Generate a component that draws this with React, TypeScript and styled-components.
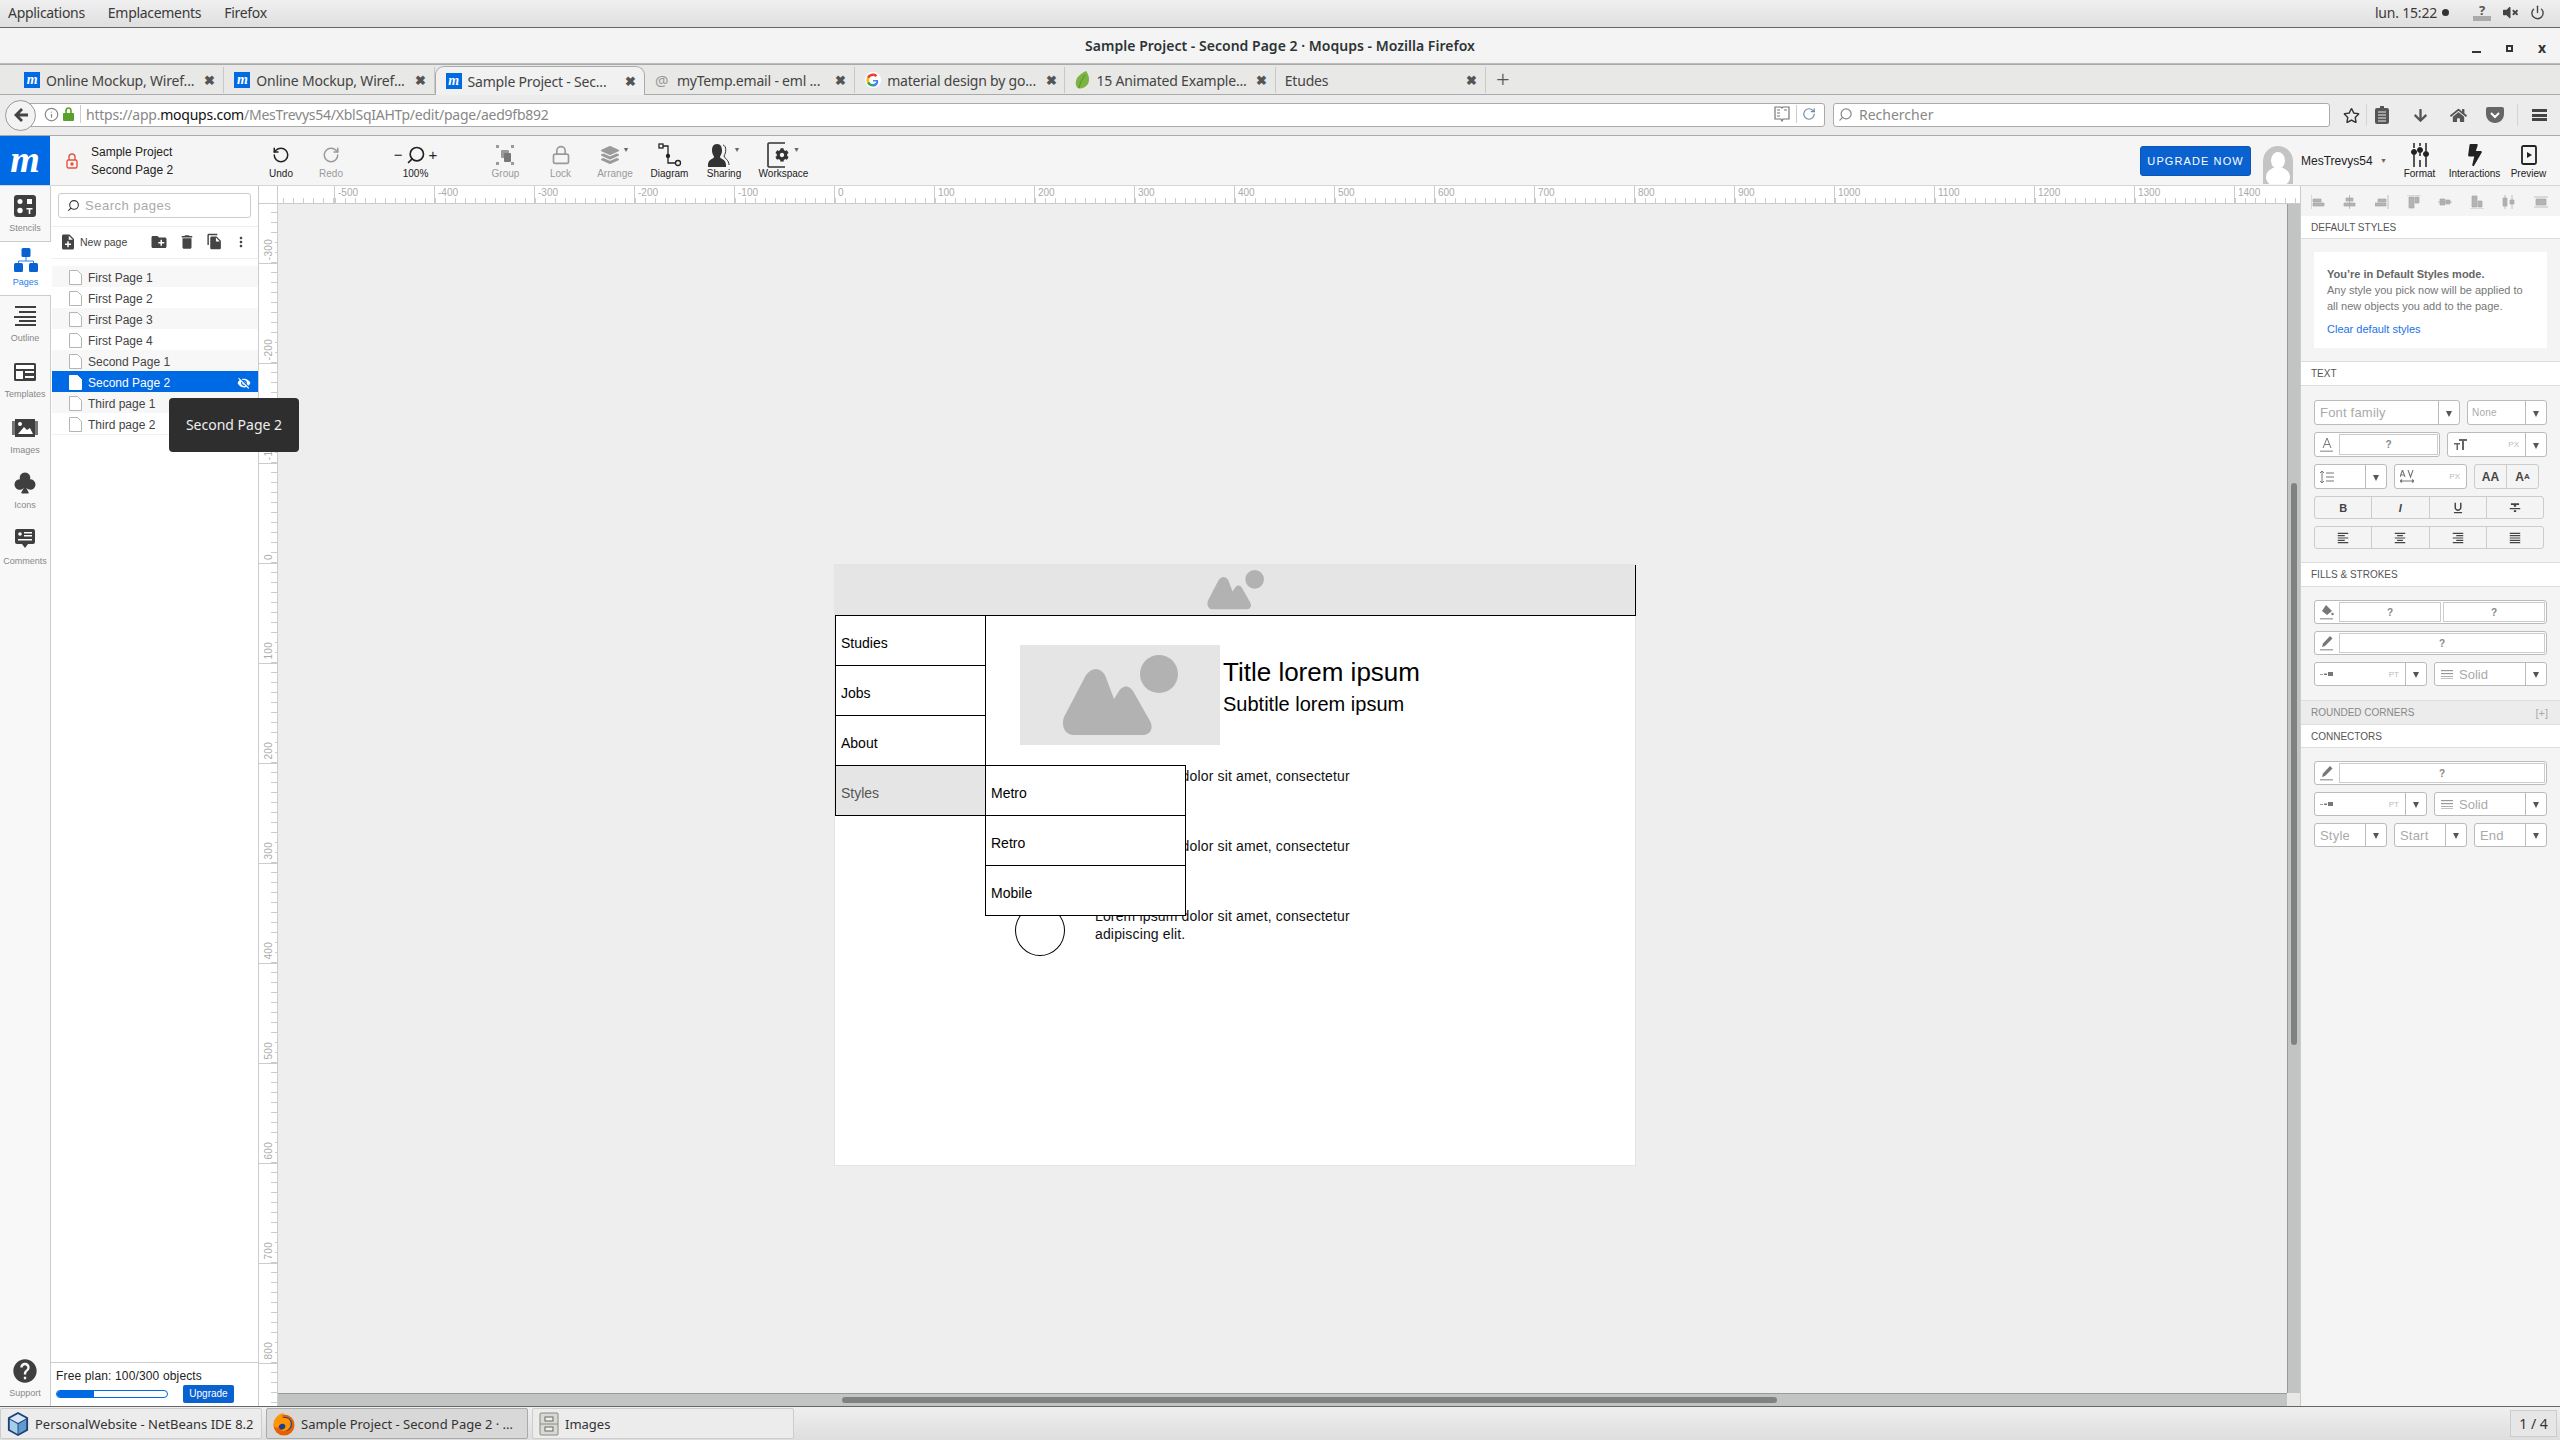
import * as React from 'react';
import styled, { createGlobalStyle, css } from 'styled-components';
import {
  FaArrowDown,
  FaBolt,
  FaCog,
  FaHome,
  FaLayerGroup,
  FaRegStar,
  FaVolumeMute,
} from 'react-icons/fa';
import {
  MdCreateNewFolder,
  MdDelete,
  MdFileCopy,
  MdFormatAlignCenter,
  MdFormatAlignJustify,
  MdFormatAlignLeft,
  MdFormatAlignRight,
  MdFormatStrikethrough,
  MdFormatUnderlined,
  MdMoreVert,
  MdNoteAdd,
  MdVisibilityOff,
  MdHelp,
} from 'react-icons/md';
import { BsSuitClubFill } from 'react-icons/bs';
import { Info, Lock, Power, RotateCcw, RotateCw, Search } from 'lucide-react';

const UI_FONT = '"Noto Sans", "Open Sans", sans-serif';
const APP_FONT = '"Liberation Sans", Arial, sans-serif';
const BLUE = '#0069e4';

const GlobalStyle = createGlobalStyle`
  html, body {
    margin: 0;
    padding: 0;
    overflow: hidden;
    background: #f4f4f4;
  }
  #root {
    width: 2560px;
    height: 1440px;
  }
  * {
    box-sizing: border-box;
  }
`;

const Screen = styled.div`
  position: relative;
  width: 2560px;
  height: 1440px;
  display: flex;
  flex-direction: column;
  font-family: ${APP_FONT};
  overflow: hidden;
`;

const FlippedSearch = styled(Search)`
  transform: scaleX(-1);
  flex: none;
`;

/* gnome shell bar */
const ShellBar = styled.div`
  height: 28px;
  flex: none;
  display: flex;
  align-items: center;
  padding: 0 3px 2px 8px;
  background: linear-gradient(#f0f0f0, #dfdfdf);
  border-bottom: 1px solid #666;
  font-family: ${UI_FONT};
  font-size: 14px;
  color: #3a3a3a;
`;

const ShellMenu = styled.span`
  margin-right: 23px;
  letter-spacing: -0.3px;
`;

const ShellRight = styled.div`
  margin-left: auto;
  display: flex;
  align-items: center;
  color: #3a3a3a;
`;

const Clock = styled.span`
  margin-right: 5px;
  letter-spacing: -0.2px;
`;

const ClockDot = styled.span`
  width: 7px;
  height: 7px;
  border-radius: 50%;
  background: #333;
  margin-right: 24px;
`;

const ShellIcon = styled.span`
  display: flex;
  margin-right: 12px;
  color: #444;
`;

const NetworkGlyph = styled.span`
  width: 18px;
  margin-right: 12px;
  text-align: center;
  font-weight: 700;
  font-size: 13px;
  color: #555;
  border-bottom: 5px solid #aaa;
  line-height: 12px;
`;

/* firefox chrome */
const TitleBar = styled.div`
  height: 36px;
  flex: none;
  position: relative;
  display: flex;
  align-items: center;
  justify-content: center;
  background: #f4f4f4;
  border-bottom: 1px solid #bbb;
  font-family: ${UI_FONT};
  font-size: 14px;
  font-weight: 600;
  letter-spacing: 0.02px;
  color: #2e3436;
`;

const WindowButtons = styled.div`
  position: absolute;
  right: 14px;
  top: 14px;
  display: flex;
  gap: 25px;
  align-items: center;
  height: 12px;
`;

const MinimizeBtn = styled.span`
  width: 9px;
  height: 2px;
  margin-top: 8px;
  background: #333;
`;

const MaximizeBtn = styled.span`
  width: 7px;
  height: 7px;
  border: 2px solid #333;
`;

const CloseBtn = styled.span`
  font-size: 14px;
  font-weight: 700;
  line-height: 12px;
  color: #333;
`;

const TabBar = styled.div`
  height: 31px;
  flex: none;
  display: flex;
  padding: 1px 0 0 14px;
  background: #e8e8e6;
  border-bottom: 1px solid #aaa;
  border-top: 1px solid #aaa;
  font-family: ${UI_FONT};
  font-size: 14px;
  color: #444;
  letter-spacing: -0.2px;
`;

const Tab = styled.div<{ $active?: boolean }>`
  width: 210.3px;
  height: ${p => (p.$active ? '29px' : '26px')};
  display: flex;
  align-items: center;
  padding: 0 8px 0 10px;
  position: relative;
  z-index: ${p => (p.$active ? 1 : 0)};
  background: ${p => (p.$active ? '#f1f1f1' : 'transparent')};
  border: ${p => (p.$active ? '1px solid #aaa' : 'none')};
  border-bottom: none;
  border-radius: ${p => (p.$active ? '9px 9px 0 0' : '0')};
  border-right: ${p => (p.$active ? '1px solid #aaa' : '1px solid #c8c8c8')};
  margin-top: ${p => (p.$active ? '0' : '1px')};
`;

const TabText = styled.span<{ $bare?: boolean }>`
  margin-left: ${p => (p.$bare ? '-1px' : '6px')};
  flex: 1;
  white-space: nowrap;
  overflow: hidden;
`;

const TabClose = styled.span`
  font-size: 13px;
  font-weight: 800;
  color: #555;
`;

const NewTab = styled.span`
  margin: 0 0 0 10px;
  font-size: 24px;
  line-height: 25px;
  font-weight: 300;
  color: #555;
`;

const Favicon = styled.span`
  width: 16px;
  height: 16px;
  flex: none;
  background: ${BLUE};
  color: #fff;
  font: italic 700 14px/15px 'Liberation Serif', serif;
  text-align: center;
`;

const AtIcon = styled.span`
  width: 16px;
  flex: none;
  color: #999;
  font-size: 15px;
`;

const NavBar = styled.div`
  height: 41px;
  flex: none;
  display: flex;
  align-items: center;
  padding-left: 5px;
  background: #ececec;
  border-bottom: 1px solid #aaa;
  font-family: ${UI_FONT};
  font-size: 14px;
  position: relative;
`;

const BackButton = styled.div`
  width: 31px;
  height: 31px;
  border-radius: 50%;
  background: #f3f3f3;
  border: 1px solid #999;
  display: flex;
  align-items: center;
  justify-content: center;
  z-index: 1;
  flex: none;
`;

const UrlField = styled.div`
  width: 1805px;
  height: 24px;
  margin-left: -16px;
  padding: 0 0 2px 23px;
  display: flex;
  align-items: center;
  background: #fff;
  border: 1px solid #aaa;
  border-radius: 0 3px 3px 0;
  flex: none;
  letter-spacing: -0.24px;
`;

const UrlIconGap = styled.span`
  width: 4px;
`;

const UrlDivider = styled.span`
  width: 1px;
  height: 18px;
  background: #ccc;
  margin: 0 5px 0 6px;
`;

const UrlMuted = styled.span`
  color: #888;
`;

const UrlHost = styled.span`
  color: #111;
`;

const UrlTools = styled.div`
  margin-left: auto;
  display: flex;
  align-items: center;
  color: #777;
  padding-right: 8px;
`;

const SearchField = styled.div`
  width: 497px;
  height: 24px;
  margin-left: 8px;
  padding: 0 0 2px 4px;
  display: flex;
  align-items: center;
  gap: 6px;
  background: #fff;
  border: 1px solid #aaa;
  border-radius: 3px;
  color: #888;
  flex: none;
`;

const NavIcons = styled.div`
  flex: 1;
  display: grid;
  grid-template-columns: 30px 1px 30px 46px 30px 44px 1px 42px;
  align-items: center;
  justify-items: center;
  color: #555;
  padding-left: 6px;
`;

const NavDivider = styled.span`
  width: 1px;
  height: 22px;
  background: #d4d4d4;
`;

const Hamburger = styled.span`
  width: 15px;
  height: 12px;
  border-top: 3px solid #444;
  border-bottom: 3px solid #444;
  position: relative;
  &::after {
    content: '';
    position: absolute;
    left: 0;
    right: 0;
    top: 1.5px;
    height: 3px;
    background: #444;
  }
`;

/* moqups toolbar */
const AppBar = styled.div`
  height: 50px;
  flex: none;
  display: flex;
  background: #f5f5f5;
  border-bottom: 1px solid #d6d6d6;
`;

const Logo = styled.div`
  width: 50px;
  flex: none;
  background: ${BLUE};
  color: #fff;
  font: italic 700 38px/46px 'Liberation Serif', serif;
  text-align: center;
`;

const ProjectBlock = styled.div`
  width: 206px;
  flex: none;
  display: flex;
  align-items: center;
  padding: 1px 0 0 16px;
  gap: 13px;
  color: #e4543f;
`;

const ProjectText = styled.div`
  font-size: 12px;
  line-height: 18px;
  color: #222;
  white-space: nowrap;
`;

const Tool = styled.div<{ $w: number; $off?: boolean }>`
  width: ${p => p.$w}px;
  flex: none;
  display: flex;
  flex-direction: column;
  align-items: center;
  padding-top: 7px;
  color: ${p => (p.$off ? '#9a9a9a' : '#222')};
  position: relative;
`;

const ZoomTool = styled(Tool)`
  margin-right: 3px;
`;

const ToolIcon = styled.div`
  height: 23px;
  display: flex;
  align-items: center;
  justify-content: center;
  gap: 3px;
`;

const ToolLabel = styled.div`
  font-size: 10px;
  line-height: 13px;
  margin-top: 1px;
  white-space: nowrap;
`;

const ZoomSign = styled.span`
  font-size: 15px;
  line-height: 15px;
`;

const Caret = styled.span`
  font-size: 7px;
  color: #666;
  margin-left: 1px;
  align-self: flex-start;
  margin-top: 3px;
`;

const AppBarRight = styled.div`
  margin-left: auto;
  display: flex;
  align-items: center;
  padding-right: 5px;
`;

const UpgradeNow = styled.div`
  width: 111px;
  height: 30px;
  border-radius: 3px;
  background: #0a62d0;
  border: 1px solid #0a55b5;
  color: #fff;
  font-size: 11px;
  letter-spacing: 1.1px;
  line-height: 28px;
  text-align: center;
`;

const Avatar = styled.div`
  width: 30px;
  height: 38px;
  margin: 8px 8px 0 12px;
  border-radius: 15px 15px 0 0;
  background: #c4c4c4;
  position: relative;
  overflow: hidden;
  &::before {
    content: '';
    position: absolute;
    left: 8px;
    top: 6px;
    width: 14px;
    height: 17px;
    border-radius: 50%;
    background: #fff;
  }
  &::after {
    content: '';
    position: absolute;
    left: 3px;
    top: 21px;
    width: 24px;
    height: 20px;
    border-radius: 50%;
    background: #fff;
  }
`;

const UserName = styled.div`
  font-size: 12px;
  color: #222;
  width: 79px;
  white-space: nowrap;
`;

const UserCaret = styled.span`
  font-size: 7px;
  color: #666;
  margin-right: 5px;
`;

const RightTools = styled.div`
  display: flex;
  align-self: stretch;
`;

/* body */
const Main = styled.div`
  flex: 1;
  min-height: 0;
  display: flex;
  position: relative;
`;

const Rail = styled.div`
  width: 51px;
  flex: none;
  display: flex;
  flex-direction: column;
  background: #f8f8f8;
  border-right: 1px solid #ccc;
`;

const RailItem = styled.div<{ $active?: boolean; $h: number }>`
  height: ${p => p.$h}px;
  flex: none;
  display: flex;
  flex-direction: column;
  align-items: center;
  justify-content: flex-end;
  padding-bottom: 8px;
  font-size: 9px;
  color: ${p => (p.$active ? '#2b7de9' : '#888')};
  background: ${p => (p.$active ? '#fff' : 'transparent')};
  border-top: ${p => (p.$active ? '1px solid #ccc' : 'none')};
  border-bottom: ${p => (p.$active ? '1px solid #ccc' : 'none')};
  margin-right: ${p => (p.$active ? '-1px' : '0')};
  position: relative;
`;

const RailIconBox = styled.div`
  height: 24px;
  margin-bottom: 5px;
  display: flex;
  align-items: center;
  justify-content: center;
`;

const RailSpacer = styled.div`
  flex: 1;
`;

const PagesPanel = styled.div`
  width: 208px;
  flex: none;
  display: flex;
  flex-direction: column;
  background: #fff;
  border-right: 1px solid #ccc;
`;

const PageSearch = styled.div`
  height: 25px;
  margin: 7px 7px 8px 7px;
  display: flex;
  align-items: center;
  gap: 5px;
  padding-left: 8px;
  border: 1px solid #ccc;
  border-radius: 3px;
  font-size: 13px;
  letter-spacing: 0.5px;
  color: #aaa;
`;

const PageTools = styled.div`
  height: 33px;
  display: flex;
  align-items: center;
  padding: 0 0 2px 8px;
  color: #444;
  border-top: 1px solid #eee;
  border-bottom: 1px solid #eee;
`;

const NewPageLabel = styled.span`
  font-size: 10.5px;
  margin: 0 23px 0 3px;
  color: #444;
  white-space: nowrap;
`;

const PageToolGap = styled.span`
  width: 10px;
`;

const PageList = styled.div`
  margin: 7px 0 0 1px;
  border-bottom: 1px solid #f0f0f0;
`;

const PageRow = styled.div<{ $selected?: boolean; $odd?: boolean }>`
  height: 21px;
  display: flex;
  align-items: center;
  padding: 2px 7px 0 17px;
  gap: 6px;
  font-size: 12px;
  color: ${p => (p.$selected ? '#fff' : '#444')};
  background: ${p => (p.$selected ? '#0069e4' : p.$odd ? '#f7f7f7' : '#fff')};
`;

const PageName = styled.span`
  flex: 1;
`;

const PlanBox = styled.div`
  margin-top: auto;
  height: 44px;
  padding: 6px 0 0 5px;
  border-top: 1px solid #ccc;
  font-size: 12px;
  letter-spacing: 0.15px;
  color: #222;
`;

const PlanRow = styled.div`
  display: flex;
  align-items: center;
  margin-top: 2px;
`;

const PlanTrack = styled.div`
  width: 112px;
  height: 8px;
  border: 1px solid ${BLUE};
  border-radius: 4px;
  overflow: hidden;
  background: #fff;
`;

const PlanFill = styled.div`
  height: 100%;
  background: ${BLUE};
`;

const PlanUpgrade = styled.div`
  width: 51px;
  height: 18px;
  margin-left: 15px;
  background: #0a62d0;
  border-radius: 2px;
  color: #fff;
  font-size: 10px;
  letter-spacing: 0;
  line-height: 18px;
  text-align: center;
`;

const Tooltip = styled.div`
  position: absolute;
  left: 169px;
  top: 212px;
  width: 130px;
  height: 54px;
  border-radius: 4px;
  background: #2e2e2e;
  color: #eee;
  font-family: ${UI_FONT};
  font-size: 14px;
  line-height: 54px;
  text-align: center;
  z-index: 5;
`;

const Stage = styled.div`
  flex: 1;
  min-width: 0;
  display: flex;
  flex-direction: column;
`;

const TopRuler = styled.div`
  height: 18px;
  flex: none;
  display: flex;
  background: #fff;
  overflow: hidden;
  border-bottom: 1px solid #ccc;
`;

const RulerCorner = styled.div`
  width: 19px;
  flex: none;
  border-right: 1px solid #ccc;
`;

const horizontalTicks = css`
  background-size: 100% 5px;
  background-position: left bottom;
  background-repeat: no-repeat;
`;

const RulerLead = styled.div`
  width: 56px;
  flex: none;
  background-image: repeating-linear-gradient(to left, #ccc 0 1px, transparent 1px 10px);
  ${horizontalTicks}
`;

const RulerCell = styled.div`
  width: 100px;
  flex: none;
  border-left: 1px solid #ccc;
  padding: 1px 0 0 3px;
  font-size: 10px;
  line-height: 11px;
  color: #aaa;
  background-image: repeating-linear-gradient(to right, #ccc 0 1px, transparent 1px 10px);
  ${horizontalTicks}
`;

const StageBody = styled.div`
  flex: 1;
  min-height: 0;
  display: flex;
`;

const SideRuler = styled.div`
  width: 19px;
  flex: none;
  display: flex;
  flex-direction: column;
  background: #fff;
  border-right: 1px solid #ccc;
  overflow: hidden;
`;

const SideCell = styled.div<{ $h: number }>`
  height: ${p => p.$h}px;
  flex: none;
  display: flex;
  align-items: flex-end;
  justify-content: flex-start;
  border-bottom: 1px solid #ccc;
  background-image: repeating-linear-gradient(to top, #ccc 0 1px, transparent 1px 10px);
  background-size: 6px 100%;
  background-position: right bottom;
  background-repeat: no-repeat;
  font-size: 10px;
  color: #aaa;
`;

const SideLabel = styled.span`
  writing-mode: vertical-rl;
  transform: rotate(180deg);
  line-height: 13px;
  margin: 0 0 3px 3px;
  background: #fff;
  letter-spacing: 0.3px;
`;

const CanvasColumn = styled.div`
  flex: 1;
  min-width: 0;
  display: flex;
  flex-direction: column;
`;

const CanvasRow = styled.div`
  flex: 1;
  min-height: 0;
  display: flex;
`;

const Canvas = styled.div`
  flex: 1;
  position: relative;
  background: #eee;
  overflow: hidden;
`;

const VScroll = styled.div`
  width: 13px;
  flex: none;
  padding: 279px 3px 0 3px;
  background: #c2c4c3;
  border-left: 1px solid #999;
`;

const VThumb = styled.div`
  height: 562px;
  border-radius: 3px;
  background: #7f8281;
`;

const HScrollRow = styled.div`
  height: 13px;
  flex: none;
  display: flex;
`;

const HScroll = styled.div`
  flex: 1;
  padding: 3px 0 0 564px;
  background: #c2c4c3;
  border-top: 1px solid #999;
`;

const HThumb = styled.div`
  width: 935px;
  height: 6px;
  border-radius: 3px;
  background: #7f8281;
`;

const ScrollCorner = styled.div`
  width: 13px;
  flex: none;
  background: #e8e8e6;
`;

/* wireframe on the canvas */
const Page = styled.div`
  position: absolute;
  left: 557px;
  top: 361px;
  width: 800px;
  height: 600px;
  background: #fff;
  box-shadow: 0 0 0 1px #e4e4e4;
`;

const Widget = styled.div<{ $x: number; $y: number; $w: number; $h: number }>`
  position: absolute;
  left: ${p => p.$x}px;
  top: ${p => p.$y}px;
  width: ${p => p.$w}px;
  height: ${p => p.$h}px;
`;

const HeaderBand = styled(Widget)`
  background: #e5e5e5;
  border-right: 1px solid #000;
  border-bottom: 1px solid #000;
  display: flex;
  align-items: center;
  justify-content: center;
`;

const ImageBox = styled(Widget)`
  background: #e5e5e5;
  display: flex;
  align-items: center;
  justify-content: center;
`;

const MenuItem = styled(Widget)<{ $on?: boolean }>`
  background: ${p => (p.$on ? '#e5e5e5' : '#fff')};
  border: 1px solid #000;
  border-top: none;
  padding-left: 5px;
  font-size: 14px;
  line-height: 54px;
  color: ${p => (p.$on ? '#555' : '#000')};
  z-index: 2;
`;

const SubMenu = styled(MenuItem)`
  z-index: 3;
`;

const SubMenuTop = styled(SubMenu)`
  border-top: 1px solid #000;
  line-height: 54px;
`;

const Heading = styled(Widget)<{ $size: number }>`
  font-size: ${p => p.$size}px;
  line-height: ${p => p.$h}px;
  color: #000;
  white-space: nowrap;
`;

const Para = styled(Widget)`
  font-size: 14px;
  line-height: 18px;
  letter-spacing: 0.15px;
  color: #111;
  z-index: 1;
`;

const Circle = styled(Widget)`
  border: 1px solid #000;
  border-radius: 50%;
  background: #fff;
  z-index: 1;
`;

/* right panel */
const Inspector = styled.div`
  width: 260px;
  flex: none;
  background: #f4f4f4;
  border-left: 1px solid #ccc;
  color: #666;
`;

const AlignBar = styled.div`
  height: 30px;
  display: flex;
  align-items: center;
  justify-content: space-between;
  padding: 2px 12px 0 10px;
  background: #f4f4f4;
`;

const SectionHead = styled.div<{ $muted?: boolean; $noTop?: boolean }>`
  height: ${p => (p.$noTop ? '23px' : '25px')};
  display: flex;
  align-items: center;
  justify-content: space-between;
  padding: 0 12px 0 10px;
  background: ${p => (p.$muted ? '#ececec' : '#fff')};
  color: ${p => (p.$muted ? '#888' : '#555')};
  font-size: 10px;
  border-bottom: 1px solid #ddd;
  border-top: ${p => (p.$noTop ? 'none' : '1px solid #ddd')};
`;

const SectionBody = styled.div<{ $top: number; $bottom: number }>`
  display: flex;
  flex-direction: column;
  gap: 7px;
  padding: ${p => p.$top}px 0 ${p => p.$bottom}px 13px;
`;

const InfoCard = styled.div`
  width: 233px;
  height: 96px;
  margin: 13px 0 13px 13px;
  padding: 14px 13px 0 13px;
  background: #fff;
  font-size: 11px;
  line-height: 16px;
  color: #777;
  white-space: nowrap;
`;

const InfoStrong = styled.div`
  font-weight: 700;
  color: #666;
`;

const InfoLink = styled.div`
  margin-top: 7px;
  color: #1a73e8;
`;

const FieldRow = styled.div<{ $gap?: number }>`
  display: flex;
  gap: ${p => p.$gap ?? 7}px;
`;

const Field = styled.div<{ $w: number; $h?: number }>`
  width: ${p => p.$w}px;
  height: ${p => p.$h ?? 25}px;
  flex: none;
  display: flex;
  align-items: center;
  background: #fff;
  border: 1px solid #bbb;
  border-radius: 3px;
  font-size: 13px;
  color: #aaa;
  overflow: hidden;
`;

const FieldText = styled.span<{ $small?: boolean }>`
  flex: 1;
  padding-left: ${p => (p.$small ? '4px' : '5px')};
  font-size: ${p => (p.$small ? '10px' : '13px')};
  white-space: nowrap;
  letter-spacing: 0.2px;
`;

const FieldUnit = styled.span`
  margin-left: auto;
  padding-right: 6px;
  font-size: 8px;
  color: #bbb;
`;

const FieldIcon = styled.span`
  display: flex;
  width: 24px;
  flex: none;
  justify-content: center;
  align-items: center;
  color: #777;
`;

const DropArrow = styled.span`
  width: 21px;
  align-self: stretch;
  flex: none;
  display: flex;
  align-items: center;
  justify-content: center;
  border-left: 1px solid #bbb;
  margin-left: auto;
  &::after {
    content: '';
    width: 0;
    height: 0;
    border-left: 3.5px solid transparent;
    border-right: 3.5px solid transparent;
    border-top: 6px solid #555;
    margin-top: 2px;
  }
`;

const FieldUnitArrow = styled(DropArrow)`
  margin-left: 0;
`;

const Swatch = styled.span`
  flex: 1;
  align-self: stretch;
  margin: 1px 1px 1px 0;
  border: 1px solid #ccc;
  display: flex;
  align-items: center;
  justify-content: center;
  color: #888;
  font-size: 10px;
  font-weight: 700;
  & + & {
    margin-left: 1px;
  }
`;

const ButtonGroup = styled.div<{ $w: number; $h: number }>`
  width: ${p => p.$w}px;
  height: ${p => p.$h}px;
  flex: none;
  display: flex;
  border: 1px solid #ccc;
  border-radius: 3px;
  background: #f4f4f4;
  overflow: hidden;
`;

const GroupButton = styled.span<{ $weight?: number; $italic?: boolean; $size?: number }>`
  flex: 1;
  display: flex;
  align-items: center;
  justify-content: center;
  color: #444;
  font-size: ${p => p.$size ?? 11}px;
  font-weight: ${p => p.$weight ?? 400};
  font-style: ${p => (p.$italic ? 'italic' : 'normal')};
  & + & {
    border-left: 1px solid #ccc;
  }
`;

const PlainFont = styled.span`
  font-size: 11px;
  color: #aaa;
`;

const SmallA = styled.span`
  font-size: 8px;
`;

/* window list at the bottom */
const TaskBar = styled.div`
  height: 34px;
  flex: none;
  display: flex;
  align-items: center;
  gap: 4px;
  padding: 0 3px 0 0;
  background: linear-gradient(#efefef, #dedede);
  border-top: 1px solid #666;
  font-family: ${UI_FONT};
  font-size: 13px;
  color: #333;
`;

const TaskButton = styled.div<{ $active?: boolean }>`
  width: 262px;
  height: 31px;
  flex: none;
  display: flex;
  align-items: center;
  gap: 6px;
  padding-left: 6px;
  white-space: nowrap;
  background: ${p => (p.$active ? '#d8d8d8' : '#ececec')};
  border: 1px solid ${p => (p.$active ? '#aaa' : '#ccc')};
  border-radius: 2px;
  & > svg {
    flex: none;
  }
`;

const Pager = styled.div`
  margin-left: auto;
  width: 47px;
  height: 27px;
  border: 1px solid #ccc;
  background: #e6e6e6;
  text-align: center;
  line-height: 25px;
  font-size: 14px;
`;

/* drawings */
const Mountains = ({ width }: { width: number }) => (
  <svg width={width} viewBox="0 0 116 80" fill="#b2b2b2">
    <path d="M12 80C2 80-1 70 2 62L24 20C30 12 38 12 43 20L52 44 57 36C61 30 67 30 71 36L88 66C92 74 88 80 80 80Z" />
    <circle cx="97" cy="19" r="19" />
  </svg>
);

const PageGlyph = ({ filled }: { filled?: boolean }) => (
  <svg width="13" height="15" viewBox="0 0 13 15">
    <path d="M1 .5H8.5L12.5 4.5V14.5H.5V.5Z" fill="#fff" stroke={filled ? '#fff' : '#b4b4b4'} />
  </svg>
);

const StencilsIcon = () => (
  <svg width="22" height="22" viewBox="0 0 22 22">
    <rect width="22" height="22" rx="3" fill="#3f3f3f" />
    <rect x="13" y="4" width="5" height="5" fill="#fff" />
    <circle cx="6" cy="6.5" r="2.5" fill="#fff" />
    <circle cx="6" cy="15.5" r="2.7" fill="#fff" />
    <path d="M12.5 13H18.5V14.5H16.3V19H14.7V14.5H12.5Z" fill="#fff" />
  </svg>
);

const PagesIcon = () => (
  <svg width="24" height="24" viewBox="0 0 24 24">
    <path d="M12 9V13M4.5 16V13H19.5V16" stroke="#2b7de9" fill="none" />
    <rect x="7.5" y="0" width="9" height="9" rx="1.5" fill="#0a62d0" />
    <rect x="0" y="15" width="9" height="9" rx="1.5" fill="#0a62d0" />
    <rect x="15" y="15" width="9" height="9" rx="1.5" fill="#0a62d0" />
  </svg>
);

const OutlineIcon = () => (
  <svg width="22" height="20" viewBox="0 0 22 20" fill="#3f3f3f">
    <rect x="1" y="0" width="21" height="2" />
    <rect x="5" y="5" width="17" height="2" />
    <rect x="0" y="10" width="22" height="2" />
    <rect x="5" y="14" width="17" height="2" />
    <rect x="1" y="18" width="21" height="2" />
  </svg>
);

const TemplatesIcon = () => (
  <svg width="22" height="18" viewBox="0 0 22 18">
    <rect width="22" height="18" rx="1.5" fill="#3f3f3f" />
    <rect x="2" y="2" width="18" height="4" fill="#fff" />
    <rect x="2" y="8" width="7" height="8" fill="#fff" />
    <rect x="11" y="8" width="9" height="2" fill="#fff" />
    <rect x="11" y="13" width="9" height="2" fill="#fff" />
  </svg>
);

const ImagesIcon = () => (
  <svg width="26" height="18" viewBox="0 0 26 18">
    <rect x="0" y="2" width="26" height="14" fill="#777" />
    <rect x="3" y="0" width="20" height="18" fill="#3f3f3f" />
    <path d="M6 15L12 8 15 11 18 9 21 15Z" fill="#fff" />
    <circle cx="8" cy="5" r="2" fill="#fff" />
  </svg>
);

const CommentsIcon = () => (
  <svg width="20" height="20" viewBox="0 0 20 20">
    <path d="M2 0H18Q20 0 20 2V13Q20 15 18 15H13L10 19 7 15H2Q0 15 0 13V2Q0 0 2 0Z" fill="#3f3f3f" />
    <circle cx="5" cy="5" r="1.8" fill="#fff" />
    <rect x="9" y="3" width="8" height="1.5" fill="#fff" />
    <rect x="9" y="6" width="8" height="1.5" fill="#fff" />
    <rect x="3" y="10" width="14" height="1.5" fill="#fff" />
  </svg>
);

const GroupIcon = () => (
  <svg width="20" height="22" viewBox="0 0 20 22" fill="#9a9a9a">
    <rect x="5" y="6" width="8" height="8" rx="1" />
    <rect x="8" y="9" width="7" height="9" rx="1" fill="#777" />
    <rect x="0" y="1" width="3" height="3" />
    <rect x="15" y="1" width="3" height="3" />
    <rect x="0" y="18" width="3" height="3" />
    <rect x="15" y="18" width="3" height="3" />
  </svg>
);

const DiagramIcon = () => (
  <svg width="24" height="24" viewBox="0 0 24 24" fill="none" stroke="#222" strokeWidth="1.3">
    <rect x="1" y="1" width="4" height="4" />
    <path d="M5 3H10V12M10 12V20H18" />
    <circle cx="20" cy="20" r="2.5" />
    <circle cx="10" cy="13" r="1.5" fill="#222" />
  </svg>
);

const SharingIcon = () => (
  <svg width="22" height="24" viewBox="0 0 22 24" fill="#333">
    <path d="M9 1C13 1 14 4 14 8 14 11 12 13 12 14 12 16 18 16 18 22V24H0V22C0 16 6 16 6 14 6 13 4 11 4 8 4 4 5 1 9 1Z" />
    <path d="M15 2C19 3 18 10 16 13 17 16 21 17 21 22" fill="none" stroke="#333" />
  </svg>
);

const WorkspaceIcon = () => (
  <svg width="20" height="26" viewBox="0 0 20 26" fill="none" stroke="#333" strokeWidth="1.6">
    <path d="M18 1H2Q1 1 1 2V24Q1 25 2 25H18" />
  </svg>
);

const WorkspaceGlyph = styled.span`
  display: flex;
  align-items: center;
  gap: 0;
  & > svg + svg {
    margin-left: -12px;
  }
`;

const FormatIcon = () => (
  <svg width="18" height="24" viewBox="0 0 18 24" fill="#222" stroke="#222">
    <path d="M3 0V5M3 12V24M9 0V3M9 10V13M9 17V24M15 0V8M15 14V24" strokeWidth="1.5" />
    <circle cx="3" cy="9" r="2.5" />
    <circle cx="9" cy="7" r="2.5" />
    <circle cx="15" cy="11" r="2.5" />
  </svg>
);

const PreviewIcon = () => (
  <svg width="16" height="20" viewBox="0 0 16 20">
    <rect x="1" y="1" width="14" height="18" rx="1.5" fill="none" stroke="#222" strokeWidth="1.8" />
    <path d="M6 7L11 10 6 13Z" fill="#222" />
  </svg>
);

const PadlockRed = () => (
  <svg width="12" height="16" viewBox="0 0 12 16" fill="none" stroke="#e4543f" strokeWidth="1.4">
    <path d="M3 7V4C3 2 4.5 1 6 1S9 2 9 4V7" />
    <rect x="1" y="7" width="10" height="8" rx="1.5" />
    <circle cx="6" cy="11" r="1" fill="#e4543f" />
  </svg>
);

const GoogleIcon = () => (
  <svg width="16" height="16" viewBox="0 0 16 16">
    <circle cx="8" cy="8" r="8" fill="#fff" />
    <path d="M13 8H8V9.6H11.3C11 11 9.8 12 8 12V14.6C11.4 14.6 14 12 13 8Z" fill="#4285f4" />
    <path d="M8 12C6.2 12 4.8 10.8 4.2 9.4L2 11C3 13.2 5.4 14.6 8 14.6Z" fill="#34a853" />
    <path d="M4.2 9.4C4 8.6 4 7.4 4.2 6.6L2 5C1.2 6.6 1.2 9.4 2 11Z" fill="#fbbc05" />
    <path d="M8 4C9 4 10 4.4 10.6 5L12.4 3.2C11.2 2 9.7 1.4 8 1.4 5.4 1.4 3 2.8 2 5L4.2 6.6C4.8 5.2 6.2 4 8 4Z" fill="#ea4335" />
  </svg>
);

const LeafIcon = () => (
  <svg width="15" height="18" viewBox="0 0 15 18">
    <path d="M11 0C14 4 15 9 13 13 11 16 7 18 4 17.5 2 17 0 14 1 10 2 5 7 2 11 0Z" fill="#7cb342" />
    <path d="M4 17C5 12 7 8 10 4" stroke="#5a8f2a" fill="none" />
  </svg>
);

const NetBeansIcon = () => (
  <svg width="22" height="26" viewBox="0 0 24 26">
    <path d="M12 0L23 6V20L12 26 1 20V6Z" fill="#1c3f78" />
    <path d="M12 2L21 7 12 12 3 7Z" fill="#d6e8f7" />
    <path d="M3 8L11.5 13V24L3 19Z" fill="#a8cde9" />
    <path d="M21 8L12.5 13V24L21 19Z" fill="#5f9bcf" />
  </svg>
);

const FirefoxIcon = () => (
  <svg width="22" height="24" viewBox="0 0 22 24">
    <circle cx="11" cy="13" r="10.5" fill="#e66000" />
    <circle cx="12" cy="12" r="7" fill="#1d3f91" />
    <path d="M1 14C0 8 4 2 11 1 8 4 9 6 12 6 17 6 19 11 17 15 15 19 10 20 7 18 12 18 14 14 11 12 8 11 6 13 5 16 3 16 2 15 1 14Z" fill="#ff9500" />
  </svg>
);

const CabinetIcon = () => (
  <svg width="20" height="24" viewBox="0 0 20 24">
    <rect x="1" y="1" width="18" height="22" rx="1" fill="#d9d9d2" stroke="#888" />
    <path d="M1 12H19" stroke="#888" />
    <rect x="6" y="5" width="8" height="4" fill="#eee" stroke="#666" />
    <rect x="6" y="15" width="8" height="4" fill="#eee" stroke="#666" />
  </svg>
);

const ClipboardIcon = () => (
  <svg width="14" height="18" viewBox="0 0 14 18" fill="#555">
    <path d="M5 0H9V2H12Q14 2 14 4V16Q14 18 12 18H2Q0 18 0 16V4Q0 2 2 2H5Z" />
    <path d="M3 6H11M3 9H11M3 12H11M3 15H11" stroke="#ececec" strokeWidth="1" />
  </svg>
);

const PocketIcon = () => (
  <svg width="18" height="16" viewBox="0 0 18 16">
    <path d="M2 0H16Q18 0 18 2V7C18 12 14 16 9 16S0 12 0 7V2Q0 0 2 0Z" fill="#666" />
    <path d="M5 6L9 10 13 6" fill="none" stroke="#fff" strokeWidth="2" />
  </svg>
);

const ReaderIcon = () => (
  <svg width="16" height="16" viewBox="0 0 16 16" fill="none" stroke="#777" strokeWidth="1.2">
    <path d="M1 1H7L8 2 9 1H15V13H9L8 15 7 13H1Z" />
    <path d="M3 4H6M3 7H6M3 10H6M10 4H13" />
  </svg>
);

const ArrowBack = () => (
  <svg width="16" height="16" viewBox="0 0 16 16" fill="#444">
    <path d="M8 1L1 8 8 15 10 13 6.5 9.5H15V6.5H6.5L10 3Z" />
  </svg>
);

const BackLock = () => (
  <svg width="11" height="14" viewBox="0 0 11 14">
    <path d="M3 6V4C3 2 4 1 5.5 1S8 2 8 4V6" fill="none" stroke="#5aa02c" strokeWidth="1.6" />
    <rect y="6" width="11" height="8" rx="1" fill="#5aa02c" />
  </svg>
);

const ALIGN_SHAPES = [
  'M0 0V14M2 4H10V7H2ZM2 8H13V11H2Z',
  'M6.5 0V14M3 3H10V6H3ZM1 8H12V11H1Z',
  'M13 0V14M3 4H11V7H3ZM0 8H11V11H0Z',
  'M0 0H14M2 2H7V13H2ZM8 2H12V8H8Z',
  'M0 7H14M2 4H7V10H2ZM8 5H12V9H8Z',
  'M0 14H14M2 1H7V12H2ZM8 6H12V12H8Z',
  'M3 0V14M10 0V14M1 3H5V11H1ZM8 5H12V9H8Z',
  'M0 2H14M0 12H14M2 4H12V10H2Z',
];

const AlignIcon = ({ d }: { d: string }) => (
  <svg width="14" height="14" viewBox="0 0 14 14">
    <path d={d} fill="#b4b4b4" stroke="#a8a8a8" strokeWidth="0.7" />
  </svg>
);

const PaintIcon = () => (
  <svg width="14" height="16" viewBox="0 0 14 16">
    <path d="M6 1L12 7 7 11 2 7Z" fill="#777" />
    <circle cx="12.5" cy="10" r="1.2" fill="#777" />
    <rect x="0" y="14" width="13" height="1.5" fill="#aaa" />
  </svg>
);

const PenIcon = () => (
  <svg width="14" height="16" viewBox="0 0 14 16">
    <path d="M10 1L12.5 3.5 5 11 2 12 3 8.5Z" fill="#777" />
    <rect x="0" y="14" width="13" height="1.5" fill="#aaa" />
  </svg>
);

const FontColorIcon = () => (
  <svg width="14" height="16" viewBox="0 0 14 16">
    <path d="M7 1L11 11M7 1L3 11M4.5 7.5H9.5" fill="none" stroke="#777" />
    <rect x="0" y="13.5" width="13" height="1.5" fill="#aaa" />
  </svg>
);

const SizeIcon = () => (
  <svg width="13" height="11" viewBox="0 0 13 11" fill="#666">
    <path d="M0 4H6V5.5H4V11H2.5V5.5H0ZM5 0H13V2H10V11H8V2H5Z" />
  </svg>
);

const LineHeightIcon = () => (
  <svg width="14" height="12" viewBox="0 0 14 12" fill="none" stroke="#777">
    <path d="M2 0V12M0 2L2 0 4 2M0 10L2 12 4 10M6 2H14M6 6H14M6 10H14" />
  </svg>
);

const TrackingIcon = () => (
  <svg width="14" height="14" viewBox="0 0 14 14" fill="none" stroke="#777" strokeWidth="1.1">
    <path d="M0 7L2.5 0 5 7M1 5H4M8 0L10.5 7 13 0M0 11H14M2 9.5L0 11 2 12.5M12 9.5L14 11 12 12.5" />
  </svg>
);

const WeightIcon = () => (
  <svg width="14" height="6" viewBox="0 0 14 6" fill="#777">
    <rect x="0" y="3" width="3" height="0.7" />
    <rect x="4" y="2.5" width="3" height="1.5" />
    <rect x="8" y="1" width="5" height="4" />
  </svg>
);

const SolidIcon = () => (
  <svg width="12" height="9" viewBox="0 0 12 9" fill="#999">
    <rect y="0" width="12" height="1.2" />
    <rect y="3" width="12" height="1.2" />
    <rect y="6" width="12" height="0.8" />
    <rect y="8" width="12" height="0.6" />
  </svg>
);

const tabs = [
  { icon: <Favicon>m</Favicon>, text: 'Online Mockup, Wiref...' },
  { icon: <Favicon>m</Favicon>, text: 'Online Mockup, Wiref...' },
  { icon: <Favicon>m</Favicon>, text: 'Sample Project - Sec...', active: true },
  { icon: <AtIcon>@</AtIcon>, text: 'myTemp.email - eml ...' },
  { icon: <GoogleIcon />, text: 'material design by go...' },
  { icon: <LeafIcon />, text: '15 Animated Example...' },
  { icon: null, text: 'Etudes' },
];

const pages = [
  'First Page 1',
  'First Page 2',
  'First Page 3',
  'First Page 4',
  'Second Page 1',
  'Second Page 2',
  'Third page 1',
  'Third page 2',
];

const railItems = [
  { label: 'Stencils', icon: <StencilsIcon />, h: 55 },
  { label: 'Pages', icon: <PagesIcon />, h: 55, active: true },
  { label: 'Outline', icon: <OutlineIcon />, h: 55 },
  { label: 'Templates', icon: <TemplatesIcon />, h: 56 },
  { label: 'Images', icon: <ImagesIcon />, h: 56 },
  { label: 'Icons', icon: <BsSuitClubFill size={24} color="#3f3f3f" />, h: 55 },
  { label: 'Comments', icon: <CommentsIcon />, h: 56 },
];

const topRulerMarks = Array.from({ length: 20 }, (_, i) => -500 + i * 100);
const sideRulerMarks = Array.from({ length: 12 }, (_, i) => -200 + i * 100);

const menu = ['Studies', 'Jobs', 'About', 'Styles'];
const subMenu = ['Metro', 'Retro', 'Mobile'];
const LOREM = 'Lorem ipsum dolor sit amet, consectetur adipiscing elit.';

const Dropdown = ({ w, h, label, small }: { w: number; h?: number; label: string; small?: boolean }) => (
  <Field $w={w} $h={h}>
    <FieldText $small={small}>{label}</FieldText>
    <DropArrow />
  </Field>
);

const StrokeRow = () => (
  <FieldRow>
    <Field $w={113} $h={24}>
      <FieldIcon>
        <WeightIcon />
      </FieldIcon>
      <FieldUnit>PT</FieldUnit>
      <FieldUnitArrow />
    </Field>
    <Field $w={113} $h={24}>
      <FieldIcon>
        <SolidIcon />
      </FieldIcon>
      Solid
      <DropArrow />
    </Field>
  </FieldRow>
);

export default function App() {
  return (
    <Screen>
      <GlobalStyle />
      <ShellBar>
        <ShellMenu>Applications</ShellMenu>
        <ShellMenu>Emplacements</ShellMenu>
        <ShellMenu>Firefox</ShellMenu>
        <ShellRight>
          <Clock>lun. 15:22</Clock>
          <ClockDot />
          <NetworkGlyph>?</NetworkGlyph>
          <ShellIcon>
            <FaVolumeMute size={15} />
          </ShellIcon>
          <ShellIcon>
            <Power size={15} strokeWidth={2.2} />
          </ShellIcon>
        </ShellRight>
      </ShellBar>

      <TitleBar>
        Sample Project - Second Page 2 · Moqups - Mozilla Firefox
        <WindowButtons>
          <MinimizeBtn />
          <MaximizeBtn />
          <CloseBtn>x</CloseBtn>
        </WindowButtons>
      </TitleBar>

      <TabBar>
        {tabs.map((tab, i) => (
          <Tab key={i} $active={tab.active}>
            {tab.icon}
            <TabText $bare={!tab.icon}>{tab.text}</TabText>
            <TabClose>✖</TabClose>
          </Tab>
        ))}
        <NewTab>+</NewTab>
      </TabBar>

      <NavBar>
        <BackButton>
          <ArrowBack />
        </BackButton>
        <UrlField>
          <Info size={15} color="#888" />
          <UrlIconGap />
          <BackLock />
          <UrlDivider />
          <UrlMuted>https://app.</UrlMuted>
          <UrlHost>moqups.com</UrlHost>
          <UrlMuted>/MesTrevys54/XblSqIAHTp/edit/page/aed9fb892</UrlMuted>
          <UrlTools>
            <ReaderIcon />
            <UrlDivider />
            <RotateCw size={14} color="#6d8aa6" />
          </UrlTools>
        </UrlField>
        <SearchField>
          <FlippedSearch size={15} />
          Rechercher
        </SearchField>
        <NavIcons>
          <FaRegStar size={17} color="#333" />
          <NavDivider />
          <ClipboardIcon />
          <FaArrowDown size={15} />
          <FaHome size={17} />
          <PocketIcon />
          <NavDivider />
          <Hamburger />
        </NavIcons>
      </NavBar>

      <AppBar>
        <Logo>m</Logo>
        <ProjectBlock>
          <PadlockRed />
          <ProjectText>
            Sample Project
            <br />
            Second Page 2
          </ProjectText>
        </ProjectBlock>
        <Tool $w={50}>
          <ToolIcon>
            <RotateCcw size={18} strokeWidth={2} />
          </ToolIcon>
          <ToolLabel>Undo</ToolLabel>
        </Tool>
        <Tool $w={50} $off>
          <ToolIcon>
            <RotateCw size={18} strokeWidth={2} />
          </ToolIcon>
          <ToolLabel>Redo</ToolLabel>
        </Tool>
        <ZoomTool $w={119}>
          <ToolIcon>
            <ZoomSign>−</ZoomSign>
            <FlippedSearch size={20} />
            <ZoomSign>+</ZoomSign>
          </ToolIcon>
          <ToolLabel>100%</ToolLabel>
        </ZoomTool>
        <Tool $w={55} $off>
          <ToolIcon>
            <GroupIcon />
          </ToolIcon>
          <ToolLabel>Group</ToolLabel>
        </Tool>
        <Tool $w={55} $off>
          <ToolIcon>
            <Lock size={20} />
          </ToolIcon>
          <ToolLabel>Lock</ToolLabel>
        </Tool>
        <Tool $w={54} $off>
          <ToolIcon>
            <FaLayerGroup size={18} />
            <Caret>▼</Caret>
          </ToolIcon>
          <ToolLabel>Arrange</ToolLabel>
        </Tool>
        <Tool $w={55}>
          <ToolIcon>
            <DiagramIcon />
          </ToolIcon>
          <ToolLabel>Diagram</ToolLabel>
        </Tool>
        <Tool $w={54}>
          <ToolIcon>
            <SharingIcon />
            <Caret>▼</Caret>
          </ToolIcon>
          <ToolLabel>Sharing</ToolLabel>
        </Tool>
        <Tool $w={65}>
          <ToolIcon>
            <WorkspaceGlyph>
              <WorkspaceIcon />
              <FaCog size={14} color="#333" />
            </WorkspaceGlyph>
            <Caret>▼</Caret>
          </ToolIcon>
          <ToolLabel>Workspace</ToolLabel>
        </Tool>
        <AppBarRight>
          <UpgradeNow>UPGRADE NOW</UpgradeNow>
          <Avatar />
          <UserName>MesTrevys54</UserName>
          <UserCaret>▼</UserCaret>
          <RightTools>
            <Tool $w={55}>
              <ToolIcon>
                <FormatIcon />
              </ToolIcon>
              <ToolLabel>Format</ToolLabel>
            </Tool>
            <Tool $w={55}>
              <ToolIcon>
                <FaBolt size={22} />
              </ToolIcon>
              <ToolLabel>Interactions</ToolLabel>
            </Tool>
            <Tool $w={53}>
              <ToolIcon>
                <PreviewIcon />
              </ToolIcon>
              <ToolLabel>Preview</ToolLabel>
            </Tool>
          </RightTools>
        </AppBarRight>
      </AppBar>

      <Main>
        <Rail>
          {railItems.map(item => (
            <RailItem key={item.label} $h={item.h} $active={item.active}>
              <RailIconBox>{item.icon}</RailIconBox>
              {item.label}
            </RailItem>
          ))}
          <RailSpacer />
          <RailItem $h={50}>
            <RailIconBox>
              <MdHelp size={28} color="#3f3f3f" />
            </RailIconBox>
            Support
          </RailItem>
        </Rail>

        <PagesPanel>
          <PageSearch>
            <FlippedSearch size={13} color="#333" />
            Search pages
          </PageSearch>
          <PageTools>
            <MdNoteAdd size={18} />
            <NewPageLabel>New page</NewPageLabel>
            <MdCreateNewFolder size={18} />
            <PageToolGap />
            <MdDelete size={18} />
            <PageToolGap />
            <MdFileCopy size={17} />
            <PageToolGap />
            <MdMoreVert size={16} />
          </PageTools>
          <PageList>
            {pages.map((name, i) => (
              <PageRow key={name} $selected={i === 5} $odd={i % 2 === 0}>
                <PageGlyph filled={i === 5} />
                <PageName>{name}</PageName>
                {i === 5 && <MdVisibilityOff size={14} />}
              </PageRow>
            ))}
          </PageList>
          <PlanBox>
            Free plan: 100/300 objects
            <PlanRow>
              <PlanTrack>
                <PlanFill style={{ width: `${(100 / 300) * 100}%` }} />
              </PlanTrack>
              <PlanUpgrade>Upgrade</PlanUpgrade>
            </PlanRow>
          </PlanBox>
        </PagesPanel>

        <Tooltip>Second Page 2</Tooltip>

        <Stage>
          <TopRuler>
            <RulerCorner />
            <RulerLead />
            {topRulerMarks.map(mark => (
              <RulerCell key={mark}>{mark}</RulerCell>
            ))}
          </TopRuler>
          <StageBody>
            <SideRuler>
              <SideCell $h={60}>
                <SideLabel>-300</SideLabel>
              </SideCell>
              {sideRulerMarks.map(mark => (
                <SideCell key={mark} $h={100}>
                  <SideLabel>{mark}</SideLabel>
                </SideCell>
              ))}
            </SideRuler>
            <CanvasColumn>
              <CanvasRow>
                <Canvas>
                  <Page>
                    <HeaderBand $x={0} $y={0} $w={801} $h={51}>
                      <Mountains width={57} />
                    </HeaderBand>
                    {menu.map((label, i) => (
                      <MenuItem key={label} $x={0} $y={51 + i * 50} $w={151} $h={50} $on={label === 'Styles'}>
                        {label}
                      </MenuItem>
                    ))}
                    <ImageBox $x={185} $y={80} $w={200} $h={100}>
                      <Mountains width={116} />
                    </ImageBox>
                    <Heading $x={388} $y={92} $w={300} $h={30} $size={26}>
                      Title lorem ipsum
                    </Heading>
                    <Heading $x={388} $y={126} $w={300} $h={26} $size={20}>
                      Subtitle lorem ipsum
                    </Heading>
                    {[0, 1, 2].map(i => (
                      <React.Fragment key={i}>
                        <Circle $x={180} $y={200 + i * 70} $w={50} $h={51} />
                        <Para $x={260} $y={202 + i * 70} $w={270} $h={36}>
                          {LOREM}
                        </Para>
                      </React.Fragment>
                    ))}
                    {subMenu.map((label, i) =>
                      i === 0 ? (
                        <SubMenuTop key={label} $x={150} $y={200} $w={201} $h={51}>
                          {label}
                        </SubMenuTop>
                      ) : (
                        <SubMenu key={label} $x={150} $y={201 + i * 50} $w={201} $h={50}>
                          {label}
                        </SubMenu>
                      ),
                    )}
                  </Page>
                </Canvas>
                <VScroll>
                  <VThumb />
                </VScroll>
              </CanvasRow>
              <HScrollRow>
                <HScroll>
                  <HThumb />
                </HScroll>
                <ScrollCorner />
              </HScrollRow>
            </CanvasColumn>
          </StageBody>
        </Stage>

        <Inspector>
          <AlignBar>
            {ALIGN_SHAPES.map(d => (
              <AlignIcon key={d} d={d} />
            ))}
          </AlignBar>
          <SectionHead $noTop>DEFAULT STYLES</SectionHead>
          <InfoCard>
            <InfoStrong>You’re in Default Styles mode.</InfoStrong>
            Any style you pick now will be applied to
            <br />
            all new objects you add to the page.
            <InfoLink>Clear default styles</InfoLink>
          </InfoCard>
          <SectionHead>TEXT</SectionHead>
          <SectionBody $top={14} $bottom={13}>
            <FieldRow>
              <Dropdown w={146} label="Font family" />
              <Dropdown w={80} label="None" small />
            </FieldRow>
            <FieldRow>
              <Field $w={126}>
                <FieldIcon>
                  <FontColorIcon />
                </FieldIcon>
                <Swatch>?</Swatch>
              </Field>
              <Field $w={100}>
                <FieldIcon>
                  <SizeIcon />
                </FieldIcon>
                <FieldUnit>PX</FieldUnit>
                <FieldUnitArrow />
              </Field>
            </FieldRow>
            <FieldRow>
              <Field $w={73}>
                <FieldIcon>
                  <LineHeightIcon />
                </FieldIcon>
                <DropArrow />
              </Field>
              <Field $w={73}>
                <FieldIcon>
                  <TrackingIcon />
                </FieldIcon>
                <FieldUnit>PX</FieldUnit>
              </Field>
              <ButtonGroup $w={65} $h={25}>
                <GroupButton $weight={700} $size={12}>
                  AA
                </GroupButton>
                <GroupButton $weight={700} $size={12}>
                  A<SmallA>A</SmallA>
                </GroupButton>
              </ButtonGroup>
            </FieldRow>
            <ButtonGroup $w={230} $h={23}>
              <GroupButton $weight={700}>B</GroupButton>
              <GroupButton $weight={700} $italic>
                I
              </GroupButton>
              <GroupButton>
                <MdFormatUnderlined size={14} />
              </GroupButton>
              <GroupButton>
                <MdFormatStrikethrough size={14} />
              </GroupButton>
            </ButtonGroup>
            <ButtonGroup $w={230} $h={23}>
              <GroupButton>
                <MdFormatAlignLeft size={14} />
              </GroupButton>
              <GroupButton>
                <MdFormatAlignCenter size={14} />
              </GroupButton>
              <GroupButton>
                <MdFormatAlignRight size={14} />
              </GroupButton>
              <GroupButton>
                <MdFormatAlignJustify size={14} />
              </GroupButton>
            </ButtonGroup>
          </SectionBody>
          <SectionHead>FILLS &amp; STROKES</SectionHead>
          <SectionBody $top={13} $bottom={14}>
            <Field $w={233} $h={24}>
              <FieldIcon>
                <PaintIcon />
              </FieldIcon>
              <Swatch>?</Swatch>
              <Swatch>?</Swatch>
            </Field>
            <Field $w={233} $h={24}>
              <FieldIcon>
                <PenIcon />
              </FieldIcon>
              <Swatch>?</Swatch>
            </Field>
            <StrokeRow />
          </SectionBody>
          <SectionHead $muted>
            ROUNDED CORNERS
            <PlainFont>[+]</PlainFont>
          </SectionHead>
          <SectionHead $noTop>CONNECTORS</SectionHead>
          <SectionBody $top={13} $bottom={13}>
            <Field $w={233} $h={24}>
              <FieldIcon>
                <PenIcon />
              </FieldIcon>
              <Swatch>?</Swatch>
            </Field>
            <StrokeRow />
            <FieldRow>
              <Dropdown w={73} h={24} label="Style" />
              <Dropdown w={73} h={24} label="Start" />
              <Dropdown w={73} h={24} label="End" />
            </FieldRow>
          </SectionBody>
        </Inspector>
      </Main>

      <TaskBar>
        <TaskButton>
          <NetBeansIcon />
          PersonalWebsite - NetBeans IDE 8.2
        </TaskButton>
        <TaskButton $active>
          <FirefoxIcon />
          Sample Project - Second Page 2 · ...
        </TaskButton>
        <TaskButton>
          <CabinetIcon />
          Images
        </TaskButton>
        <Pager>1 / 4</Pager>
      </TaskBar>
    </Screen>
  );
}
